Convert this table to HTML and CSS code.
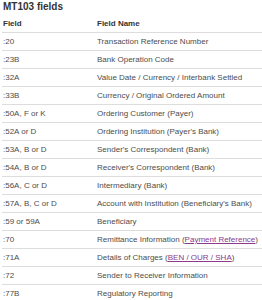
FILE: index.html
```html
<!DOCTYPE html>
<html>
<head>
<meta charset="utf-8">
<link rel="stylesheet" href="styles.css">
</head>
<body>
<div class="page">
  <h2 class="title">MT103 fields</h2>
  <table class="fields">
    <thead>
      <tr><th class="c1">Field</th><th>Field Name</th></tr>
    </thead>
    <tbody>
      <tr><td>:20</td><td>Transaction Reference Number</td></tr>
      <tr><td>:23B</td><td>Bank Operation Code</td></tr>
      <tr><td>:32A</td><td>Value Date / Currency / Interbank Settled</td></tr>
      <tr><td>:33B</td><td>Currency / Original Ordered Amount</td></tr>
      <tr><td>:50A, F or K</td><td>Ordering Customer (Payer)</td></tr>
      <tr><td>:52A or D</td><td>Ordering Institution (Payer's Bank)</td></tr>
      <tr><td>:53A, B or D</td><td>Sender's Correspondent (Bank)</td></tr>
      <tr><td>:54A, B or D</td><td>Receiver's Correspondent (Bank)</td></tr>
      <tr><td>:56A, C or D</td><td>Intermediary (Bank)</td></tr>
      <tr><td>:57A, B, C or D</td><td>Account with Institution (Beneficiary's Bank)</td></tr>
      <tr><td>:59 or 59A</td><td>Beneficiary</td></tr>
      <tr><td>:70</td><td>Remittance Information (<a href="#" class="lnk">Payment Reference</a>)</td></tr>
      <tr><td>:71A</td><td>Details of Charges (<a href="#" class="lnk">BEN / OUR / SHA</a>)</td></tr>
      <tr><td>:72</td><td>Sender to Receiver Information</td></tr>
      <tr><td>:77B</td><td>Regulatory Reporting</td></tr>
    </tbody>
  </table>
</div>
</body>
</html>
```

FILE: styles.css
```css
html, body {
  margin: 0;
  padding: 0;
  background: #ffffff;
}
.page {
  padding: 0 0 0 2px;
  font-family: "Liberation Sans", Arial, sans-serif;
}
.title {
  margin: 0 0 2px 1px;
  font-size: 10px;
  line-height: 13px;
  font-weight: bold;
  color: #333333;
}
.fields {
  border-collapse: collapse;
  width: 100%;
  font-size: 8px;
  color: #4d4d4d;
}
.fields th {
  text-align: left;
  font-weight: bold;
  color: #333333;
  line-height: 17px;
  height: 17px;
  padding: 0 0 0 1px;
  border-bottom: 1px solid #dddddd;
}
.fields th.c1 {
  width: 93px;
}
.fields td {
  line-height: 17px;
  height: 17px;
  padding: 0 0 0 1px;
  border-bottom: 1px solid #dddddd;
  white-space: nowrap;
}
.lnk {
  color: #8c3a8c;
  text-decoration: underline;
}
```
